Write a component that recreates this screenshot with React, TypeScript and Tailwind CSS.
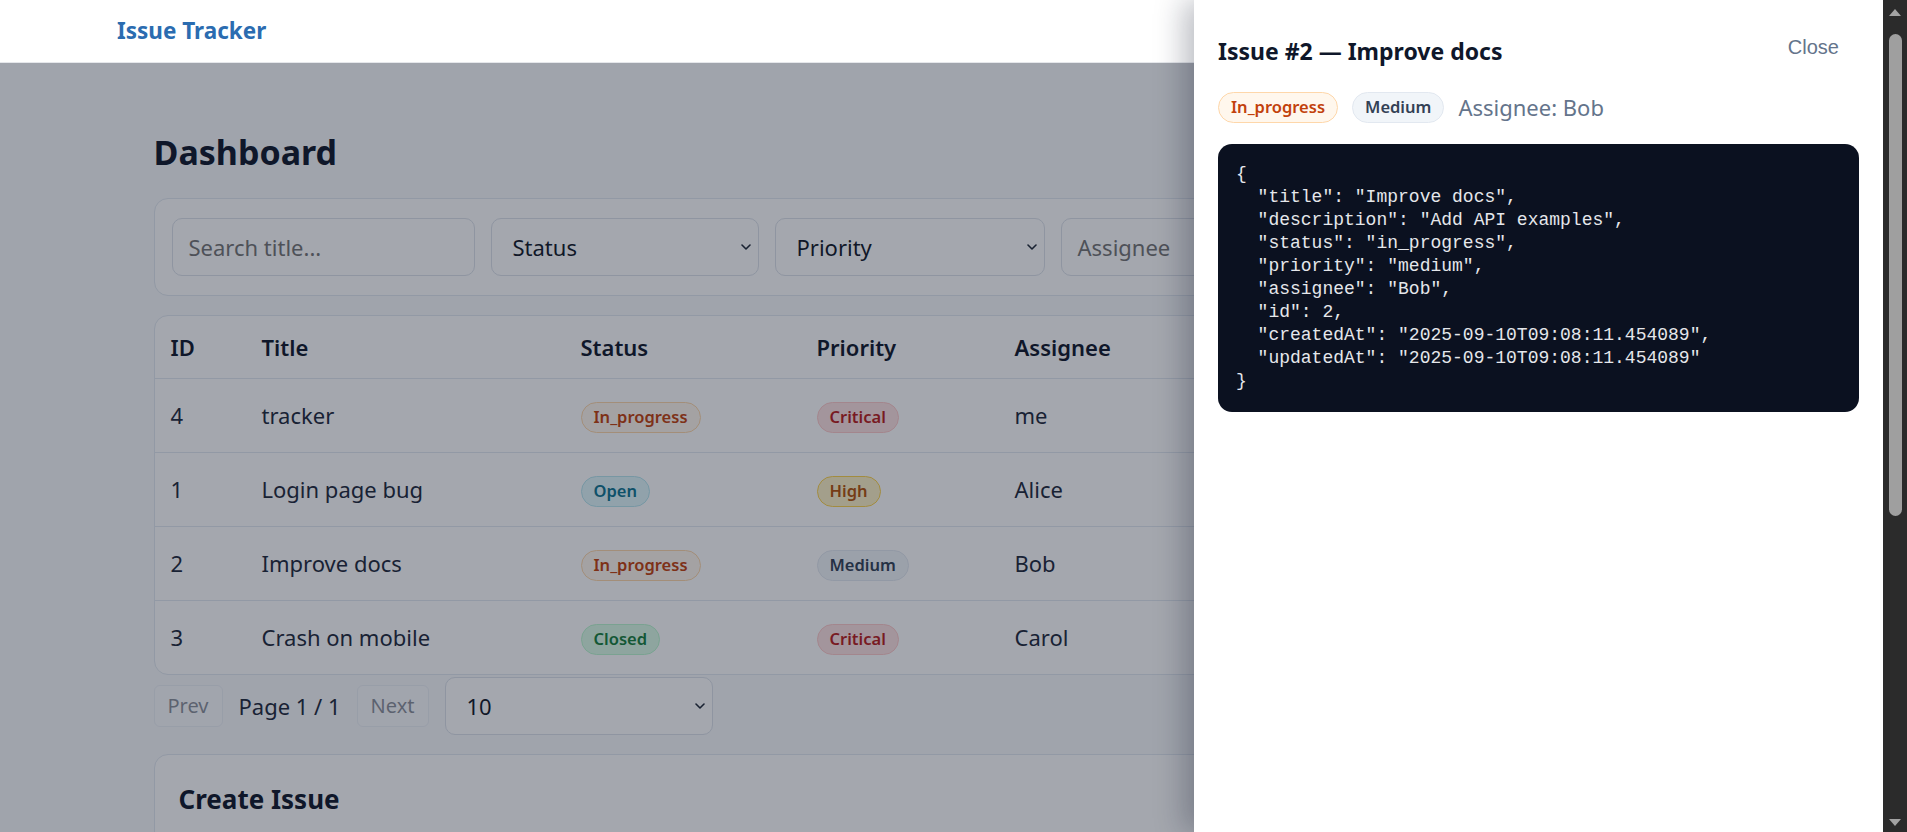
import React from 'react'

type Tone = 'in_progress' | 'open' | 'closed' | 'critical' | 'high' | 'medium'

const tones: Record<Tone, string> = {
  in_progress: 'bg-[#fff7ed] border-[#fed7aa] text-[#c2410c]',
  open: 'bg-[#e0f7fb] border-[#b6e5ee] text-[#0e7490]',
  closed: 'bg-[#dcfce7] border-[#bbf7d0] text-[#15803d]',
  critical: 'bg-[#fee2e2] border-[#fecaca] text-[#b91c1c]',
  high: 'bg-[#fef3c7] border-[#fcd34d] text-[#b45309]',
  medium: 'bg-[#f1f5f9] border-[#e2e8f0] text-[#334155]',
}

const label = (s: string) => s.charAt(0).toUpperCase() + s.slice(1)

function Badge({ value }: { value: Tone }) {
  return (
    <span className={`inline-flex items-center h-[31px] px-[12px] rounded-full border text-[16.5px] font-semibold ${tones[value]}`}>
      {label(value)}
    </span>
  )
}

function Chevron() {
  return (
    <svg width="10" height="6" viewBox="0 0 10 6" fill="none" className="shrink-0">
      <polyline points="1,1 5,5 9,1" stroke="#1f2937" strokeWidth="1.6" strokeLinecap="round" strokeLinejoin="round" />
    </svg>
  )
}

function FakeSelect({ text, width }: { text: string; width: string }) {
  return (
    <div className={`${width} h-[58px] rounded-[10px] border border-[#dde2ea] bg-white flex items-center justify-between pl-[21px] pr-[7px] text-[22px] text-[#111827]`}>
      <span>{text}</span>
      <Chevron />
    </div>
  )
}

const issues: { id: number; title: string; status: Tone; priority: Tone; assignee: string }[] = [
  { id: 4, title: 'tracker', status: 'in_progress', priority: 'critical', assignee: 'me' },
  { id: 1, title: 'Login page bug', status: 'open', priority: 'high', assignee: 'Alice' },
  { id: 2, title: 'Improve docs', status: 'in_progress', priority: 'medium', assignee: 'Bob' },
  { id: 3, title: 'Crash on mobile', status: 'closed', priority: 'critical', assignee: 'Carol' },
]

const cols = 'grid grid-cols-[91px_319px_236px_198px_1fr] items-center'

const selected = {
  title: 'Improve docs',
  description: 'Add API examples',
  status: 'in_progress',
  priority: 'medium',
  assignee: 'Bob',
  id: 2,
  createdAt: '2025-09-10T09:08:11.454089',
  updatedAt: '2025-09-10T09:08:11.454089',
}

function Scrollbar() {
  return (
    <div className="w-[24px] h-full bg-[#2b2b2b] flex flex-col items-center">
      <svg width="12" height="7" viewBox="0 0 12 7" className="mt-[9px]">
        <polygon points="6,0 12,7 0,7" fill="#a3a3a3" />
      </svg>
      <div className="mt-[18px] w-[13px] h-[482px] rounded-full bg-[#9f9f9f]" />
      <div className="flex-1" />
      <svg width="12" height="7" viewBox="0 0 12 7" className="mb-[6px]">
        <polygon points="0,0 12,0 6,7" fill="#a3a3a3" />
      </svg>
    </div>
  )
}

export default function App() {
  return (
    <div className="flex w-[1907px] h-[832px] overflow-hidden font-['Noto_Sans','Open_Sans',sans-serif] text-[#1e293b]">
      <div className="relative flex-1 h-full overflow-hidden bg-[#f8fafc]">
        <header className="h-[63px] bg-white border-b border-[#e5e7eb] flex items-center pl-[117px]">
          <span className="text-[22.5px] font-bold text-[#2b6cb0]">Issue Tracker</span>
        </header>

        <div className="relative">
          <main className="mx-auto max-w-[1600px] px-3 pt-[68px] pb-10">
            <h1 className="text-[34px] leading-[42px] font-bold text-[#0f172a] mb-[25px]">Dashboard</h1>

            <div className="rounded-[14px] border border-[#e2e8f0] bg-white px-[17px] py-[19px] flex gap-4">
              <div className="w-[303px] h-[58px] rounded-[10px] border border-[#dde2ea] flex items-center px-4 text-[22px] text-[#757575]">
                Search title...
              </div>
              <FakeSelect text="Status" width="w-[268px]" />
              <FakeSelect text="Priority" width="w-[270px]" />
              <div className="flex-1 h-[58px] rounded-[10px] border border-[#dde2ea] flex items-center px-4 text-[22px] text-[#757575]">
                Assignee
              </div>
            </div>

            <div className="mt-[19px] rounded-[14px] border border-[#e2e8f0] bg-white overflow-hidden">
              <div className={`${cols} h-[62px] text-[22px] font-semibold text-[#0f172a]`}>
                <div className="pl-4">ID</div>
                <div className="pl-4">Title</div>
                <div className="pl-4">Status</div>
                <div className="pl-4">Priority</div>
                <div className="pl-4">Assignee</div>
              </div>
              {issues.map((it) => (
                <div key={it.id} className={`${cols} h-[74px] border-t border-[#e2e8f0] text-[22px]`}>
                  <div className="pl-4">{it.id}</div>
                  <div className="pl-4">{it.title}</div>
                  <div className="pl-4"><Badge value={it.status} /></div>
                  <div className="pl-4"><Badge value={it.priority} /></div>
                  <div className="pl-4">{it.assignee}</div>
                </div>
              ))}
            </div>

            <div className="mt-[2px] flex items-center gap-4">
              <button className="h-[42px] px-[13px] rounded-[6px] border border-[#e2e8f0] bg-white text-[20px] text-[#1e293b] opacity-50">Prev</button>
              <span className="text-[22px]">Page 1 / 1</span>
              <button className="h-[42px] px-[13px] rounded-[6px] border border-[#e2e8f0] bg-white text-[20px] text-[#1e293b] opacity-50">Next</button>
              <FakeSelect text="10" width="w-[268px]" />
            </div>

            <div className="mt-[19px] rounded-[14px] border border-[#e2e8f0] bg-white p-6 h-[300px]">
              <h2 className="text-[26px] leading-[40px] font-bold text-[#0f172a]">Create Issue</h2>
            </div>
          </main>
          <div className="absolute inset-0 bg-[rgba(15,23,42,0.38)]" />
        </div>

        <aside className="absolute top-0 right-0 h-full w-[689px] bg-white shadow-[-10px_0_28px_rgba(15,23,42,0.28)] px-6 pt-[33px]">
          <div className="flex items-start justify-between">
            <h3 className="mt-[2px] text-[23px] leading-[32px] font-bold text-[#0f172a]">Issue #2 — Improve docs</h3>
            <button className="px-5 text-[20px] leading-[28px] text-[#64748b] font-['Liberation_Sans',Arial,sans-serif]">Close</button>
          </div>
          <div className="mt-[24px] flex items-center gap-[14px]">
            <Badge value="in_progress" />
            <Badge value="medium" />
            <span className="text-[22px] text-[#64748b]">Assignee: Bob</span>
          </div>
          <pre className="mt-5 rounded-[14px] bg-[#0b1120] px-[18px] py-[19px] text-[18px] leading-[23px] font-['Liberation_Mono','DejaVu_Sans_Mono',monospace] text-[#e5e7eb]">
            {JSON.stringify(selected, null, 2)}
          </pre>
        </aside>
      </div>
      <Scrollbar />
    </div>
  )
}
